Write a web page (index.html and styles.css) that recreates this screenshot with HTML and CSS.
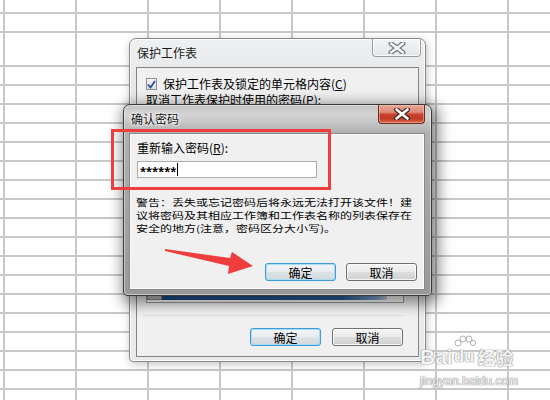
FILE: index.html
```html
<!DOCTYPE html>
<html lang="zh-CN">
<head>
<meta charset="utf-8">
<title>确认密码</title>
<link rel="stylesheet" href="styles.css">
</head>
<body>
<div class="sheet">
  <section class="win win-back">
    <header class="titlebar">
      <span class="title">保护工作表</span>
      <span class="close close-inactive">
        <svg width="18" height="12" viewBox="0 0 18 12"><path d="M3 1.5 L15 10.5 M15 1.5 L3 10.5" stroke="#6d7480" stroke-width="5" stroke-linecap="round"/><path d="M3 1.5 L15 10.5 M15 1.5 L3 10.5" stroke="#f4f6f8" stroke-width="2.6" stroke-linecap="round"/></svg>
      </span>
    </header>
    <div class="panel panel-back">
      <div class="check-row">
        <span class="checkbox"><svg width="9" height="9" viewBox="0 0 9 9"><path d="M1 4.5 L3.5 7.5 L8 1" fill="none" stroke="#2a4fa8" stroke-width="1.8"/></svg></span>
        <span>保护工作表及锁定的单元格内容(<u>C</u>)</span>
      </div>
      <div class="pw-row">取消工作表保护时使用的密码(<u>P</u>):</div>
      <div class="listbox">
        <div class="list-row"><span class="list-box-mark"></span><span class="list-sel"></span></div>
      </div>
      <div class="sep"></div>
      <div class="buttons buttons-back">
        <button class="btn btn-default">确定</button>
        <button class="btn">取消</button>
      </div>
    </div>
  </section>

  <section class="win win-front">
    <header class="titlebar titlebar-front">
      <span class="title title-glow">确认密码</span>
      <span class="close close-red">
        <svg width="18" height="12" viewBox="0 0 18 12"><path d="M3.5 1.5 L14.5 10.5 M14.5 1.5 L3.5 10.5" stroke="#4a2620" stroke-width="5" stroke-linecap="round"/><path d="M3.5 1.5 L14.5 10.5 M14.5 1.5 L3.5 10.5" stroke="#ffffff" stroke-width="2.6" stroke-linecap="round"/></svg>
      </span>
    </header>
    <div class="panel panel-front">
      <div class="label">重新输入密码(<u>R</u>):</div>
      <div class="input"><span class="stars">******</span><span class="caret"></span></div>
      <p class="warning">警告：丢失或忘记密码后将永远无法打开该文件！建<br>议将密码及其相应工作簿和工作表名称的列表保存在<br>安全的地方(注意，密码区分大小写)。</p>
      <div class="buttons buttons-front">
        <button class="btn btn-default">确定</button>
        <button class="btn">取消</button>
      </div>
    </div>
  </section>

  <div class="highlight"></div>

  <svg class="arrow" width="100" height="36" viewBox="0 0 100 36">
    <polygon points="5,4 70,13 72,7 93,21 68,29 69,21 5,6" fill="#ef3d3d"/>
  </svg>

  <div class="wm">
    <div class="wm-logo"><span>Bai</span><span class="paw"><svg class="toes" width="22" height="12" viewBox="0 0 22 12"><circle cx="4" cy="8" r="3" /><circle cx="9" cy="4" r="3"/><circle cx="15" cy="4" r="3"/><circle cx="19" cy="8" r="2.6"/></svg>du</span><span class="wm-cn">经验</span></div>
    <div class="wm-url">jingyan.baidu.com</div>
  </div>
</div>
</body>
</html>
```

FILE: styles.css
```css
* { box-sizing: border-box; }

body {
  margin: 0;
  font-family: "Noto Sans CJK SC", "Liberation Sans", sans-serif;
  font-size: 12px;
  color: #000;
}

.sheet {
  position: relative;
  width: 550px;
  height: 400px;
  overflow: hidden;
  background-color: #fff;
  background-image:
    linear-gradient(to right, #c8c8c8 0 2px, transparent 2px),
    linear-gradient(to bottom, transparent 0 12px, #c8c8c8 12px 14px, transparent 14px 31px, #c8c8c8 31px 33px, transparent 33px);
  background-size: 72px 100%, 100% 40px;
  background-position: 3px 0, 0 0;
  background-repeat: repeat-x, no-repeat;
}

.sheet::before {
  content: "";
  position: absolute;
  left: 0;
  right: 0;
  top: 65px;
  bottom: 0;
  background-image: linear-gradient(to bottom, #c8c8c8 0 2px, transparent 2px);
  background-size: 100% 19px;
}

/* ---------- windows ---------- */
.win {
  position: absolute;
  display: flex;
  flex-direction: column;
}

.win-back {
  left: 129px;
  top: 38px;
  width: 297px;
  height: 324px;
  border: 1px solid #8a8a8a;
  border-radius: 7px 7px 4px 4px;
  background: linear-gradient(to bottom, #eef0f2 0, #e6e8ea 40px, #e9eaeb 100%);
  box-shadow: inset 0 0 0 1px rgba(255,255,255,.7), 1px 2px 8px rgba(0,0,0,.25);
}

.win-front {
  left: 123px;
  top: 104px;
  width: 309px;
  height: 192px;
  border: 1px solid #3a3a3a;
  border-radius: 7px 7px 4px 4px;
  background: linear-gradient(to bottom, #c4c4c4 0, #d4d4d4 10px, #b0b0b0 28px, #a2a2a2 60%, #999 100%);
  box-shadow: inset 0 0 0 1px rgba(255,255,255,.45), 3px 4px 14px 4px rgba(0,0,0,.45);
}

.titlebar {
  height: 28px;
  flex: none;
  display: flex;
  align-items: flex-start;
}

.title {
  padding-left: 7px;
  line-height: 28px;
  font-size: 12px;
  color: #1b1b1b;
}

.title-glow {
  padding-left: 7px;
  line-height: 27px;
  color: #111;
  text-shadow: 0 0 5px #fff, 0 0 3px #fff, 0 0 2px #fff;
}

.close {
  margin-left: auto;
  display: flex;
  align-items: center;
  justify-content: center;
  border-radius: 0 0 4px 4px;
}

.close-inactive {
  width: 49px;
  height: 18px;
  margin-right: 4px;
  border: 1px solid #9a9ea4;
  border-top: none;
  background: linear-gradient(to bottom, #f3f4f5, #e4e6e8);
  box-shadow: inset 0 0 0 1px rgba(255,255,255,.8);
}

.close-red {
  width: 47px;
  height: 19px;
  margin-right: 6px;
  border: 1px solid #6b2a20;
  border-top: none;
  background: linear-gradient(to bottom, #e7a595 0, #dc8a78 40%, #c8442e 52%, #c13b25 75%, #d8674c 100%);
  box-shadow: inset 0 0 0 1px rgba(255,210,200,.45);
}

.panel {
  flex: 1;
  display: flex;
  flex-direction: column;
  background: #f0f0f0;
}

/* ---------- back dialog panel ---------- */
.panel-back {
  margin: 0 6px 4px 6px;
  border: 1px solid #838383;
  padding: 10px 15px 0 9px;
}

.check-row {
  display: flex;
  align-items: center;
  height: 12px;
  line-height: 12px;
}

.checkbox {
  width: 11px;
  height: 12px;
  margin-right: 6px;
  border: 1px solid #8e8f8f;
  background: linear-gradient(to bottom, #f4f4f4, #dedede);
  display: flex;
  align-items: center;
  justify-content: center;
}

.pw-row {
  margin-top: 4px;
  line-height: 12px;
}

.listbox {
  margin-top: 4px;
  height: 193px;
  width: 258px;
  border: 1px solid #9a9a9a;
  background: #fff;
  display: flex;
  flex-direction: column;
  justify-content: flex-end;
  padding: 0 0 2px 0;
}

.list-row {
  display: flex;
  height: 8px;
}

.list-box-mark {
  width: 15px;
  background: #c0c0c0;
  border: 1px solid #888;
}

.list-sel {
  flex: 1;
  margin-right: 16px;
  background: linear-gradient(to right, #1f4f8f 0, #2a5f9f 80%, #7fa7d0 95%, #c7d6e6 100%);
}

.sep {
  margin: 12px 0 0 -3px;
  width: 260px;
  height: 1px;
  background: #d6dde3;
}

.buttons {
  display: flex;
  justify-content: flex-end;
  gap: 11px;
}

.buttons-back {
  margin-top: 12px;
}

.btn {
  width: 71px;
  height: 18px;
  padding: 0;
  border: 1px solid #707070;
  border-radius: 3px;
  background: linear-gradient(to bottom, #f3f3f3 0, #ebebeb 48%, #dddddd 52%, #d0d0d0 100%);
  box-shadow: inset 0 0 0 1px rgba(255,255,255,.8);
  font-family: "Noto Sans CJK SC", sans-serif;
  font-size: 12px;
  line-height: 15px;
  color: #000;
}

.btn-default {
  border-color: #3c9bd8;
  background: linear-gradient(to bottom, #f2f5f7 0, #e9edf0 48%, #dde2e6 52%, #d2d8dc 100%);
  box-shadow: inset 0 0 0 1px #a8def5;
}

/* ---------- front dialog panel ---------- */
.panel-front {
  margin: 0 6px 5px 5px;
  border: 1px solid #8a8a8a;
  box-shadow: inset 0 0 0 1px #fbfbfb;
  padding: 8px 7px 8px 7px;
}

.label {
  line-height: 12px;
  height: 12px;
}

.input {
  margin-top: 7px;
  width: 180px;
  height: 17px;
  border: 1px solid #abadb3;
  background: #fff;
  display: flex;
  align-items: center;
  padding-left: 2px;
}

.stars {
  font-family: "Liberation Sans", sans-serif;
  font-size: 15px;
  letter-spacing: 0.2px;
  line-height: 12px;
  padding-top: 4px;
  color: #000;
  text-shadow: 0.3px 0 0 #000;
}

.caret {
  width: 1px;
  height: 13px;
  margin-left: 1px;
  background: #000;
}

.warning {
  margin: 17px 0 0 -1px;
  line-height: 17.6px;
  font-size: 12px;
  white-space: nowrap;
  transform: scaleY(0.75);
  transform-origin: 0 0;
}

.buttons-front {
  margin-top: auto;
  gap: 10px;
}

/* ---------- annotations ---------- */
.highlight {
  position: absolute;
  left: 111px;
  top: 129px;
  width: 220px;
  height: 61px;
  border: 3px solid #ef3e3e;
}

.arrow {
  position: absolute;
  left: 160px;
  top: 245px;
}

.wm {
  position: absolute;
  left: 420px;
  top: 340px;
  width: 104px;
  color: rgba(255,255,255,.92);
  font-family: "Liberation Sans", sans-serif;
  text-shadow: 0 0 1px #8f8f8f, 0 0 1px #8f8f8f, 0 0 1px #a0a0a0;
}

.wm-logo {
  display: flex;
  align-items: flex-end;
  height: 27px;
  font-size: 21px;
  font-weight: bold;
  line-height: 20px;
}

.paw {
  position: relative;
  font-size: 17px;
  margin: 0 3px 0 1px;
}

.toes {
  position: absolute;
  left: 0;
  top: -12px;
  fill: rgba(255,255,255,.9);
  stroke: #a0a0a0;
  stroke-width: 0.8;
}

.wm-cn {
  font-family: "Noto Sans CJK SC", sans-serif;
  font-size: 18px;
}

.wm-url {
  margin-top: 8px;
  font-size: 12px;
  line-height: 12px;
  letter-spacing: 0.1px;
}
```
